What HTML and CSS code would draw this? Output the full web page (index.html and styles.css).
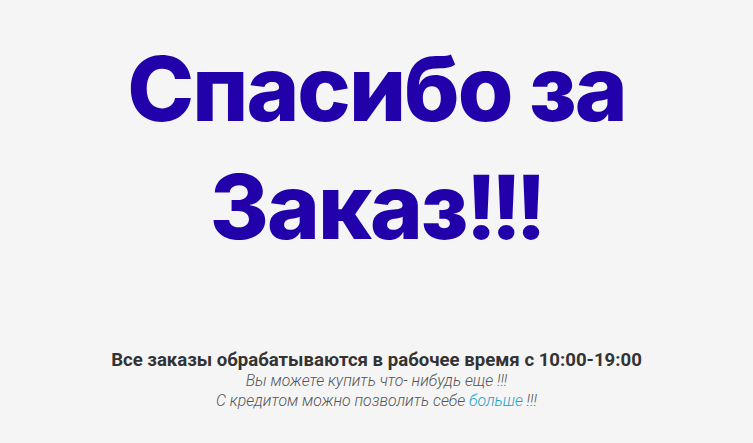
FILE: index.html
```html
<!DOCTYPE html>
<html lang="ru">
<head>
<meta charset="utf-8">
<link rel="stylesheet" href="styles.css">
</head>
<body>
<main class="page">
  <h1 class="title"><span class="line">Спасибо за</span> <span class="line">Заказ<span class="bangs">!!!</span></span></h1>
  <div class="info">
    <p class="hours">Все заказы обрабатываются в рабочее время с 10:00-19:00</p>
    <p class="note">Вы можете купить что- нибудь еще !!!</p>
    <p class="note">С кредитом можно позволить себе <a class="more" href="#">больше</a> !!!</p>
  </div>
</main>
</body>
</html>
```
FILE: styles.css
```css
html, body {
  margin: 0;
  padding: 0;
  background: #f5f5f5;
}
.page {
  display: flex;
  flex-direction: column;
  align-items: center;
  font-family: Roboto, "Liberation Sans", sans-serif;
}
.title {
  margin: 30px 0 0;
  width: 560px;
  text-align: center;
  font-family: Inter, "Noto Sans", sans-serif;
  font-weight: 800;
  font-size: 90px;
  line-height: 118px;
  letter-spacing: -2px;
  color: #2200aa;
}
.line {
  display: block;
}
.bangs {
  margin-left: 2px;
  font-family: Roboto, Inter, sans-serif;
  font-weight: 900;
  letter-spacing: 0;
}
.info {
  margin-top: 81px;
  text-align: center;
}
.hours {
  margin: 0;
  font-size: 18.6px;
  font-weight: 700;
  line-height: 22px;
  color: #333;
}
.note {
  margin: 0;
  font-size: 15.8px;
  font-weight: 300;
  font-style: italic;
  line-height: 19.5px;
  color: #555;
}
.more {
  color: #1aa3c4;
  text-decoration: none;
}
```
